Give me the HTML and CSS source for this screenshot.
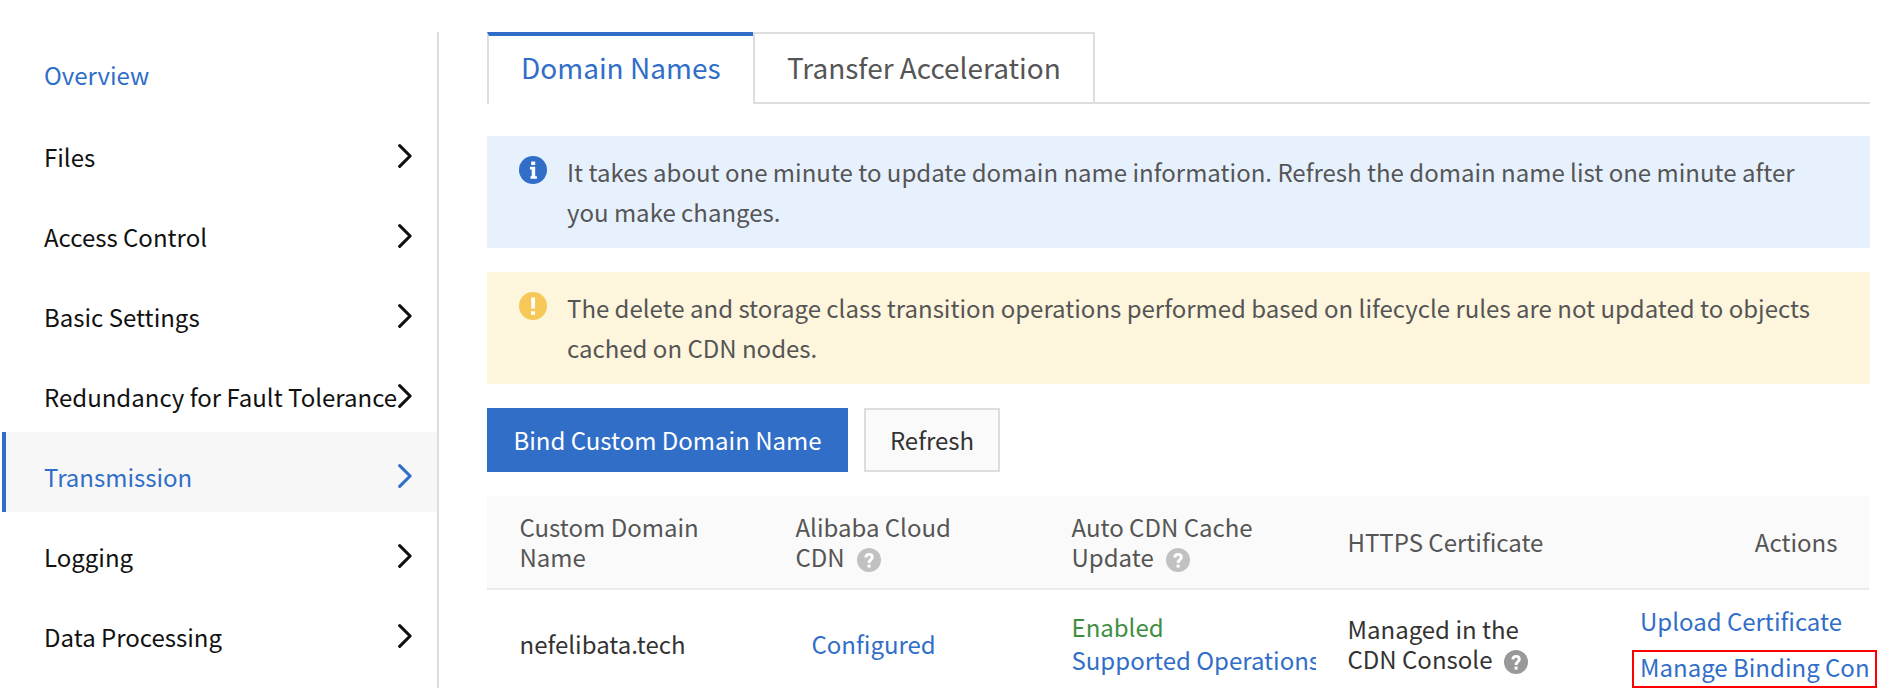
FILE: index.html
```html
<!DOCTYPE html>
<html lang="en">
<head>
<meta charset="utf-8">
<title>Domain Names</title>
<link rel="stylesheet" href="styles.css">
</head>
<body>
<svg class="defs" width="0" height="0">
  <symbol id="chevron" viewBox="0 0 16 24"><path d="M2.700 1.700L13.100 12L2.700 22.300" fill="none" stroke="currentColor" stroke-width="3.100" stroke-linecap="round" stroke-linejoin="round"/></symbol>
  <symbol id="help" viewBox="0 0 24 24"><circle cx="12" cy="12" r="12" fill="currentColor"/><path d="M8.900 9.600C8.900 7.300 10 6.400 12 6.400s3.300 1 3.300 2.900c0 2.400-3.200 2.500-3.200 5.700" fill="none" stroke="#fff" stroke-width="2.900"/><rect x="10.600" y="16.600" width="3" height="3" fill="#fff"/></symbol>
</svg>
<div class="page">
  <nav class="side">
    <a class="item overview"><span>Overview</span></a>
    <a class="item"><span>Files</span><svg><use href="#chevron"/></svg></a>
    <a class="item"><span>Access Control</span><svg><use href="#chevron"/></svg></a>
    <a class="item"><span>Basic Settings</span><svg><use href="#chevron"/></svg></a>
    <a class="item"><span>Redundancy for Fault Tolerance</span><svg><use href="#chevron"/></svg></a>
    <a class="item active"><span>Transmission</span><svg><use href="#chevron"/></svg></a>
    <a class="item"><span>Logging</span><svg><use href="#chevron"/></svg></a>
    <a class="item"><span>Data Processing</span><svg><use href="#chevron"/></svg></a>
  </nav>
  <main class="main">
    <div class="tabs">
      <div class="tab current">Domain Names</div>
      <div class="tab">Transfer Acceleration</div>
      <div class="rest"></div>
    </div>
    <div class="notice info">
      <svg viewBox="0 0 28 28"><circle cx="14" cy="14" r="14" fill="#316ec8"/><path d="M12.200 5.500h4v3.500h-4zM11 10.800h5.200v9.400h1.700v2.600h-6.400v-2.600h1.200v-6.800h-1.700z" fill="#fff"/></svg>
      <p>It takes about one minute to update domain name information. Refresh the domain name list one minute after you make changes.</p>
    </div>
    <div class="notice warn">
      <svg viewBox="0 0 28 28"><circle cx="14" cy="14" r="14" fill="#f6c858"/><path d="M12.100 5.500h4l-.2 11h-3.600zM12.100 19.300h4v3.500h-4z" fill="#fff"/></svg>
      <p>The delete and storage class transition operations performed based on lifecycle rules are not updated to objects cached on CDN nodes.</p>
    </div>
    <div class="buttons">
      <button class="btn primary">Bind Custom Domain Name</button>
      <button class="btn">Refresh</button>
    </div>
    <div class="row head">
      <div class="cell">Custom Domain<br>Name</div>
      <div class="cell">Alibaba Cloud<br>CDN<svg class="help"><use href="#help"/></svg></div>
      <div class="cell">Auto CDN Cache<br>Update<svg class="help"><use href="#help"/></svg></div>
      <div class="cell">HTTPS Certificate</div>
      <div class="cell right">Actions</div>
    </div>
    <div class="row body">
      <div class="cell">nefelibata.tech</div>
      <div class="cell indent"><a>Configured</a></div>
      <div class="cell update"><span class="ok">Enabled</span><a class="clip">Supported Operations</a></div>
      <div class="cell">Managed in the<br>CDN Console<svg class="help dark"><use href="#help"/></svg></div>
      <div class="cell actions"><a>Upload Certificate</a><span class="marked"><a>Manage Binding Con</a></span></div>
    </div>
  </main>
</div>
</body>
</html>
```
FILE: styles.css
```css
* { box-sizing: border-box; }
body {
  margin: 0;
  background: #fff;
  font: 24px/30px "Noto Sans CJK SC", "Noto Sans", sans-serif;
  color: #333;
}
.defs { display: block; }
.page { display: flex; height: 688px; padding-top: 32px; overflow: hidden; }
a { color: #316ec8; }

.side { width: 439px; flex: none; height: 656px; padding-left: 2px; border-right: 2px solid #ddd; }
.item {
  display: flex; align-items: center; justify-content: space-between;
  height: 80px; padding: 10px 24px 0 38px; border-left: 4px solid transparent;
  color: #111; white-space: nowrap;
}
.item span { width: 340px; }
.item svg { width: 16px; height: 24px; flex: none; margin-top: -2px; }
.overview { padding-top: 6px; color: #316ec8; }
.active { background: #f7f7f7; border-left-color: #316ec8; color: #316ec8; }

.main { width: 1383px; margin-left: 48px; flex: none; }
.tabs { display: flex; height: 72px; font-size: 28px; line-height: 40px; color: #555; }
.tab { width: 342px; padding: 13px 0 0 32px; border: 2px solid #ddd; white-space: nowrap; }
.current { width: 266px; padding-top: 11px; border-top: 4px solid #316ec8; border-right: 0; border-bottom: 0; color: #316ec8; }
.rest { flex: 1; border-bottom: 2px solid #ddd; }

.notice { display: flex; gap: 20px; height: 112px; padding: 16px 32px; color: #555; line-height: 40px; }
.notice svg { width: 28px; height: 28px; flex: none; margin-top: 4px; }
.notice p { margin: 0; }
.info { margin-top: 32px; background: #e7f1fe; }
.warn { margin-top: 24px; background: #fef5dd; }

.buttons { display: flex; gap: 16px; margin: 24px 0; }
.btn { width: 136px; height: 64px; padding: 0; border: 2px solid #ddd; background: #fafafa; font: inherit; color: #333; white-space: nowrap; }
.primary { width: 361px; background: #316ec8; border-color: #316ec8; color: #fff; }

.row { display: grid; grid-template-columns: repeat(4, 276px) 278px; width: 1382px; }
.head { height: 94px; background: #fafafa; border-bottom: 2px solid #ebebeb; color: #555; }
.body { height: 108px; }
.cell { align-self: center; padding-left: 32.5px; white-space: nowrap; }
.right { text-align: right; padding-right: 31.5px; }
.indent { padding-left: 48.5px; }
.help { width: 24px; height: 24px; margin: -5px 0 -5px 12px; color: #c1c1c1; }
.dark { color: #999; }
.update { display: flex; flex-direction: column; gap: 3px; padding-bottom: 2px; }
.ok { color: #3f8f43; }
.clip { width: 244px; overflow: hidden; }
.actions { align-self: start; display: flex; flex-direction: column; padding: 16px 0 0 49px; }
.marked { width: 245px; height: 38px; margin: 14px 0 0 -8px; padding: 0 6px; border: 2px solid #f00; }
```
